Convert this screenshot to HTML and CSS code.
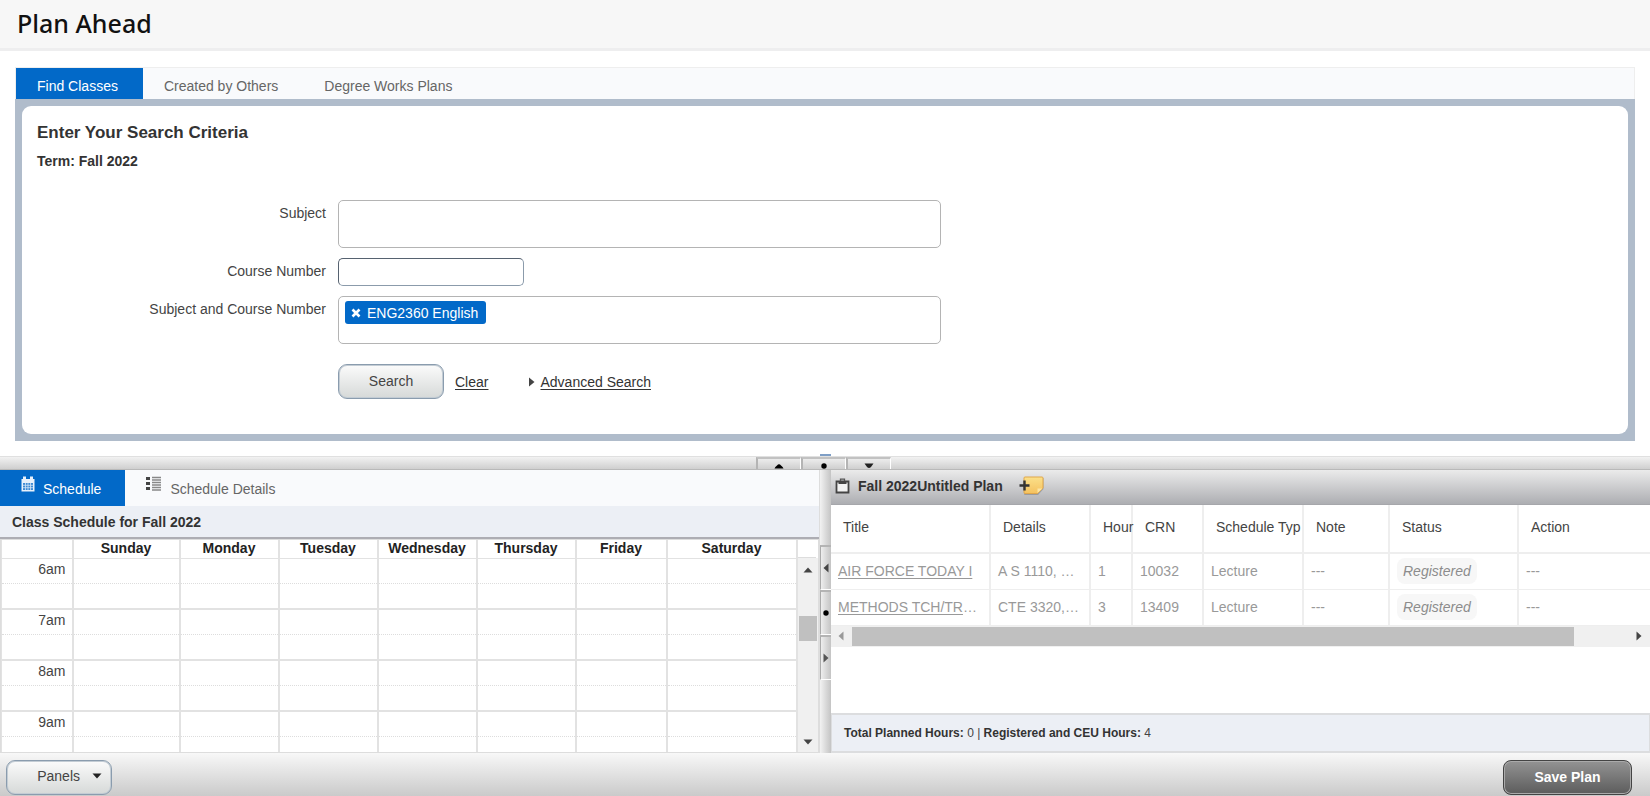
FILE: index.html
```html
<!DOCTYPE html>
<html lang="en">
<head>
<meta charset="utf-8">
<title>Plan Ahead</title>
<link rel="stylesheet" href="styles.css">
</head>
<body>
<header class="page-head"><h1>Plan Ahead</h1></header>

<main class="finder">
  <nav class="tabs" role="tablist">
    <button class="tab active" role="tab" aria-selected="true">Find Classes</button>
    <button class="tab" role="tab">Created by Others</button>
    <button class="tab" role="tab">Degree Works Plans</button>
  </nav>
  <div class="frame">
    <form class="search">
      <h2>Enter Your Search Criteria</h2>
      <p class="term">Term: Fall 2022</p>
      <div class="fields">
        <label for="subject">Subject</label>
        <input id="subject" class="box" type="text">
        <label for="course">Course Number</label>
        <input id="course" class="short" type="text">
        <label for="subjcourse">Subject and Course Number</label>
        <div class="box multi">
          <span class="chip"><button type="button" class="chip-x" aria-label="Remove"><svg width="10" height="10" viewBox="0 0 10 10"><path d="M1.500 1.500 8.500 8.500M8.500 1.500 1.500 8.500" stroke="#fff" stroke-width="2.600"/></svg></button>ENG2360 English</span>
          <input id="subjcourse" type="text">
        </div>
        <div class="actions">
          <button type="button" class="btn">Search</button>
          <a href="#" class="clear">Clear</a>
          <svg width="6" height="10" viewBox="0 0 6 10"><path d="M0 .5 5.500 5 0 9.500z" fill="#444"/></svg>
          <a href="#">Advanced Search</a>
        </div>
      </div>
    </form>
  </div>
</main>

<div class="split-h">
  <div class="split-h-buttons">
    <button aria-label="Collapse up"><svg width="10" height="6" viewBox="0 0 10 6"><path d="M.5 5.500Q1 4 3 2.500 5 .2 7 2.500 9 4 9.500 5.500z" fill="#000"/></svg></button>
    <button aria-label="Reset"><svg width="10" height="6" viewBox="0 0 10 6"><circle cx="5" cy="3" r="2.700" fill="#000"/></svg></button>
    <button aria-label="Collapse down"><svg width="10" height="6" viewBox="0 0 10 6"><path d="M.5 .5H9.500L7 4Q5 6 3 4z" fill="#222"/></svg></button>
    <i class="marker"></i>
  </div>
</div>

<section class="panes">
  <div class="pane schedule">
    <nav class="sched-tabs" role="tablist">
      <button class="stab active" role="tab" aria-selected="true"><svg width="14" height="16" viewBox="0 0 14 16"><path d="M.5 3H13.500V15.500H.5z" fill="#e8f1fb"/><path d="M2 .5H5V4H2zM9 .5H12V4H9z" fill="#e8f1fb"/><path d="M2 7H12V14H2z" fill="#3f8bd4"/><path d="M4.500 7V14M7 7V14M9.500 7V14M2 9.300H12M2 11.700H12" stroke="#cfe3f6" stroke-width=".8"/></svg><span>Schedule</span></button>
      <button class="stab" role="tab"><svg width="16" height="16" viewBox="0 0 16 16"><path d="M0 1H4V4H0zM0 6H4V9H0zM0 11H4V14H0z" fill="#444"/><path d="M6 1.500H15M6 4H15M6 6.500H15M6 9H15M6 11.500H15M6 14H15" stroke="#888" stroke-width="1.500"/></svg><span>Schedule Details</span></button>
    </nav>
    <h3>Class Schedule for Fall 2022</h3>
    <div class="calendar">
      <div class="cal-clip">
        <table class="cal">
          <colgroup><col class="c-time"><col class="c-sun"><col class="c-mid"><col class="c-mid"><col class="c-mid"><col class="c-mid"><col class="c-fri"><col class="c-sat"></colgroup>
          <thead><tr><th></th><th>Sunday</th><th>Monday</th><th>Tuesday</th><th>Wednesday</th><th>Thursday</th><th>Friday</th><th>Saturday</th></tr></thead>
          <tbody>
            <tr class="hour"><th>6am</th><td></td><td></td><td></td><td></td><td></td><td></td><td></td></tr>
            <tr class="half"><th></th><td></td><td></td><td></td><td></td><td></td><td></td><td></td></tr>
            <tr class="hour"><th>7am</th><td></td><td></td><td></td><td></td><td></td><td></td><td></td></tr>
            <tr class="half"><th></th><td></td><td></td><td></td><td></td><td></td><td></td><td></td></tr>
            <tr class="hour"><th>8am</th><td></td><td></td><td></td><td></td><td></td><td></td><td></td></tr>
            <tr class="half"><th></th><td></td><td></td><td></td><td></td><td></td><td></td><td></td></tr>
            <tr class="hour"><th>9am</th><td></td><td></td><td></td><td></td><td></td><td></td><td></td></tr>
            <tr class="half"><th></th><td></td><td></td><td></td><td></td><td></td><td></td><td></td></tr>
          </tbody>
        </table>
      </div>
      <div class="vside">
        <div class="vcap"></div>
        <div class="vscroll">
          <svg width="10" height="6" viewBox="0 0 10 6"><path d="M.5 5.500 5 .5 9.500 5.500z" fill="#444"/></svg>
          <div class="vthumb"></div>
          <svg class="down" width="10" height="6" viewBox="0 0 10 6"><path d="M.5 .5H9.500L5 5.500z" fill="#444"/></svg>
        </div>
      </div>
    </div>
  </div>

  <div class="split-v">
    <button aria-label="Collapse left"><svg width="6" height="10" viewBox="0 0 6 10"><path d="M5.500 .5 .5 5 5.500 9.500z" fill="#444"/></svg></button>
    <button aria-label="Reset"><svg width="6" height="6" viewBox="0 0 6 6"><circle cx="3" cy="3" r="2.700" fill="#000"/></svg></button>
    <button aria-label="Collapse right"><svg width="6" height="10" viewBox="0 0 6 10"><path d="M.5 .5 5.500 5 .5 9.500z" fill="#555"/></svg></button>
  </div>

  <div class="pane plan">
    <div class="plan-head">
      <svg width="15" height="16" viewBox="0 0 15 16"><path d="M1.500 3.500H13.500V14.500H1.500z" fill="#f2f2f2" stroke="#444" stroke-width="1.800"/><path d="M3.500 3H11.500V6H3.500z" fill="#444"/><path d="M5.500 3V1.200H9.500V3" fill="none" stroke="#555" stroke-width="1.300"/></svg>
      <h3>Fall 2022Untitled Plan</h3>
      <button class="note-btn" aria-label="Add note"><svg width="26" height="20" viewBox="0 0 26 20"><defs><linearGradient id="n" x1="0" y1="0" x2="0" y2="1"><stop offset="0" stop-color="#fbe08a"/><stop offset="1" stop-color="#f5c25f"/></linearGradient></defs><path d="M6 2H24.500V13L19 19H6Q5 19 5 18V3Q5 2 6 2z" fill="#777" opacity=".5"/><path d="M6 1H23Q24 1 24 2V12L18.500 17.500H6Q5 17.500 5 16.500V2Q5 1 6 1z" fill="url(#n)" stroke="#e0a74b"/><path d="M18.500 17V12.500H23.500z" fill="#fbe6a6"/><path d="M5.500 4.500V14.500M.5 9.500H10.500" stroke="#333" stroke-width="2.400"/></svg></button>
    </div>
    <div class="plan-scroll">
      <table class="plan-table">
        <colgroup><col class="p-title"><col class="p-details"><col class="p-hours"><col class="p-crn"><col class="p-type"><col class="p-note"><col class="p-status"><col class="p-action"></colgroup>
        <thead><tr><th>Title</th><th>Details</th><th>Hour</th><th>CRN</th><th>Schedule Typ</th><th>Note</th><th>Status</th><th>Action</th></tr></thead>
        <tbody>
          <tr><td><a href="#">AIR FORCE TODAY I</a></td><td>A S 1110, …</td><td>1</td><td>10032</td><td>Lecture</td><td>---</td><td><span class="pill">Registered</span></td><td>---</td></tr>
          <tr><td><a href="#">METHODS TCH/TR</a>…</td><td>CTE 3320,…</td><td>3</td><td>13409</td><td>Lecture</td><td>---</td><td><span class="pill">Registered</span></td><td>---</td></tr>
        </tbody>
      </table>
    </div>
    <div class="hscroll">
      <svg width="6" height="10" viewBox="0 0 6 10"><path d="M5.500 .5 .5 5 5.500 9.500z" fill="#999"/></svg>
      <div class="htrack"><div class="hthumb"></div></div>
      <svg width="6" height="10" viewBox="0 0 6 10"><path d="M.5 .5 5.500 5 .5 9.500z" fill="#444"/></svg>
    </div>
    <p class="totals"><b>Total Planned Hours:</b> 0 | <b>Registered and CEU Hours:</b> 4</p>
  </div>
</section>

<footer class="bar">
  <button class="btn panels">Panels<svg width="10" height="6" viewBox="0 0 10 6"><path d="M.5 .5H9.500L5 5.500z" fill="#222"/></svg></button>
  <button class="save">Save Plan</button>
</footer>
</body>
</html>
```

FILE: styles.css
```css
* { box-sizing: border-box; }

body {
  margin: 0;
  height: 100vh;
  display: flex;
  flex-direction: column;
  overflow: hidden;
  background: #fff;
  color: #444;
  font: 14px/20px "Liberation Sans", Arial, sans-serif;
}

h1, h2, h3, p { margin: 0; }
button, input { font: inherit; color: inherit; }
button { padding: 0; border: 0; background: none; cursor: pointer; }
svg { flex: none; display: block; }
a { color: #333; text-underline-offset: 2px; }

.page-head {
  padding: 5px 17px 7px;
  background: #f7f7f7;
  border-bottom: 3px solid #eeeeef;
}
.page-head h1 {
  color: #111;
  font: 500 25px/36px "Noto Sans", "Open Sans", sans-serif;
}

.finder { padding: 16px 15px 15px; }
.tabs {
  display: flex;
  height: 32px;
  background: #f9fafc;
  border: 1px solid #eee;
  border-bottom: 0;
}
.tab {
  padding: 5px 25px 0 21px;
  color: #666;
}
.tab.active { background: #0269c8; color: #fff; }
.frame {
  padding: 7px;
  background: #b0bccb;
}
.search {
  padding: 17px 15px 33px;
  min-height: 328px;
  background: #fff;
  border-radius: 9px;
}
.search h2 { color: #333; font-size: 17px; line-height: 20px; }
.term { margin-top: 8px; color: #333; font-weight: bold; line-height: 20px; }

.fields {
  display: grid;
  grid-template-columns: 289px minmax(0, 603px);
  column-gap: 12px;
  row-gap: 10px;
  margin-top: 29px;
  justify-items: start;
}
.fields label { justify-self: end; padding-top: 3px; }
.box {
  width: 100%;
  height: 48px;
  border: 1px solid #b4b4b4;
  border-radius: 5px;
  background: #fff;
}
.short {
  width: 186px;
  height: 28px;
  border: 1px solid #8b9bab;
  border-top-color: #566270;
  border-left-color: #566270;
  border-radius: 5px;
}
.multi {
  display: flex;
  align-items: flex-start;
  padding: 4px 6px;
}
.multi input { flex: 1; min-width: 0; border: 0; outline: 0; height: 20px; }
.chip {
  display: flex;
  align-items: center;
  gap: 6px;
  height: 23px;
  padding: 0 8px 0 6px;
  border-radius: 3px;
  background: #0269c8;
  color: #fff;
}
.actions {
  grid-column: 2;
  display: flex;
  align-items: center;
  margin-top: 10px;
}
.btn {
  width: 106px;
  height: 35px;
  padding-bottom: 1px;
  border: 1px solid #8a9cae;
  border-radius: 9px;
  background: linear-gradient(#fbfbfb, #d6d9d8);
  box-shadow: inset 0 0 0 1px #c3ccd4;
}
.clear { margin: 0 41px 0 11px; }
.actions svg { margin-right: 5px; }

.split-h {
  flex: none;
  height: 14px;
  display: flex;
  justify-content: center;
  border-top: 1px solid #e0e0e0;
  border-bottom: 1px solid #b9b9b9;
  background: linear-gradient(#f2f2f2, #cfcfcf);
}
.split-h-buttons { position: relative; display: flex; margin-right: 3px; }
.split-h-buttons button {
  width: 45px;
  display: flex;
  justify-content: center;
  padding-top: 4px;
  border: 1px solid #fff;
  border-top: 2px solid #c2c2c2;
  border-left: 2px solid #b4b4b4;
  border-bottom: 0;
}
.marker {
  position: absolute;
  top: -3px;
  left: 50%;
  width: 11px;
  height: 2px;
  margin-left: -4px;
  background: #7f9fc6;
}

.panes {
  flex: 1;
  min-height: 0;
  display: grid;
  grid-template-columns: minmax(0, 1fr) 12px minmax(0, 1fr);
  grid-template-rows: minmax(0, 1fr);
}
.pane { display: flex; flex-direction: column; min-height: 0; }

.sched-tabs { display: flex; flex: none; height: 36px; background: #f9fafc; }
.stab {
  display: flex;
  gap: 8px;
  padding: 6px 24px 0 21px;
  color: #666;
}
.stab span { padding-top: 3px; }
.stab.active { background: #0269c8; color: #fff; }
.schedule h3 {
  flex: none;
  padding: 6px 12px 5px;
  border-bottom: 2px solid #adadb3;
  background: #eceff5;
  color: #333;
  font-size: 14px;
  line-height: 20px;
}
.calendar {
  flex: 1;
  min-height: 0;
  display: flex;
  border: 1px solid #ddd;
}
.cal-clip { flex: 1; min-width: 0; overflow: hidden; }
.cal { width: 100%; table-layout: fixed; border-collapse: collapse; }
.cal th, .cal td { padding: 0; border: 1px solid #e2e2e2; border-width: 1px 2px; }
.cal th:first-child { border-left-width: 1px; }
.cal thead th { height: 18px; border-top: 0; color: #222; line-height: 17px; }
.cal tbody th {
  padding-right: 6px;
  font-weight: normal;
  text-align: right;
  line-height: 20px;
  vertical-align: top;
}
.cal .hour > * { height: 25px; border-bottom: 1px dotted #ddd; }
.cal .half > * { height: 26px; border-top: 1px dotted #ddd; border-bottom: 2px solid #e2e2e2; }
.c-time { width: 71px; }
.c-sun { width: 107px; }
.c-mid { width: 99px; }
.c-fri { width: 91px; }
.c-sat { width: 130px; }

.vside {
  display: flex;
  flex-direction: column;
  width: 22px;
  border-left: 2px solid #e2e2e2;
}
.vcap { height: 18px; margin-right: 2px; border-bottom: 1px solid #ddd; }
.vscroll {
  flex: 1;
  display: flex;
  flex-direction: column;
  align-items: center;
  padding: 9px 0 7px;
  background: #f0f0f0;
}
.vthumb { width: 18px; height: 25px; margin-top: 43px; background: #c0c0c0; }
.down { margin-top: auto; }

.split-v {
  padding-top: 75px;
  border-left: 1px solid #ddd;
  background: linear-gradient(90deg, #f2f2f2, #c4c4c4);
}
.split-v button {
  display: flex;
  align-items: center;
  justify-content: center;
  width: 100%;
  height: 45px;
  border-top: 2px solid #b4b4b4;
  border-left: 1px solid #aaa;
  border-bottom: 1px solid #fff;
}

.plan-head {
  flex: none;
  display: flex;
  align-items: center;
  height: 35px;
  padding: 0 4px 3px;
  border-bottom: 1px solid #a6a7ab;
  background: linear-gradient(#ebebeb, #adaeb2);
}
.plan-head h3 { margin: 0 16px 0 8px; color: #333; font-size: 14px; line-height: 20px; }
.plan-scroll { flex: none; overflow: hidden; }
.plan-table { width: 1000px; table-layout: fixed; border-collapse: collapse; }
.plan-table th, .plan-table td {
  white-space: nowrap;
  text-align: left;
  border-right: 2px solid #eee;
}
.plan-table th {
  height: 48px;
  padding: 0 0 3px 12px;
  border-bottom: 2px solid #eee;
  font-weight: normal;
}
.plan-table td {
  height: 36px;
  padding: 0 7px;
  border-bottom: 1px solid #eee;
  color: #999;
}
.plan-table td a { color: #999; }
.p-title { width: 159px; }
.p-details { width: 100px; }
.p-hours { width: 42px; }
.p-crn { width: 71px; }
.p-type { width: 100px; }
.p-note { width: 86px; }
.p-status { width: 129px; }
.pill {
  display: inline-block;
  padding: 3px 6px;
  border-radius: 8px;
  background: #f7f7f7;
  color: #8c8c8c;
  font-style: italic;
}
.hscroll {
  flex: none;
  display: flex;
  align-items: center;
  height: 21px;
  padding: 0 8px 0 7px;
  background: #f0f0f0;
}
.htrack { flex: 1; margin: 0 8px; }
.hthumb { width: 93%; height: 19px; background: #c0c0c0; }
.totals {
  margin-top: auto;
  padding: 9px 12px;
  border: 2px solid #dcdddf;
  border-width: 2px 1px;
  background: #eceff5;
  font-size: 12px;
  line-height: 18px;
}
.totals b { color: #333; }

.bar {
  flex: none;
  display: flex;
  justify-content: space-between;
  align-items: flex-start;
  height: 43px;
  padding: 7px 18px 0 6px;
  background: linear-gradient(#f8f8f8, #cacaca);
}
.panels {
  display: flex;
  align-items: center;
  justify-content: flex-end;
  gap: 12px;
  padding-right: 9px;
  padding-bottom: 3px;
}
.save {
  width: 129px;
  height: 35px;
  padding-bottom: 2px;
  border: 1px solid #444;
  border-radius: 8px;
  background: linear-gradient(#939393, #5c5c5c);
  box-shadow: inset 0 0 0 1px #aaa;
  color: #fff;
  font-weight: bold;
}
```
